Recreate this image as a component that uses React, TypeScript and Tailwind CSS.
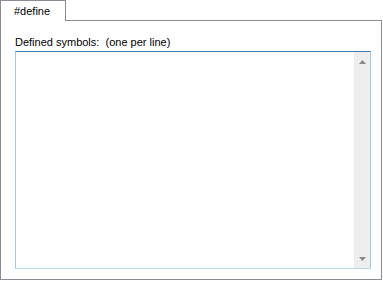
export default function App() {
  return (
    <div className="w-[383px] h-[282px] bg-white font-['Liberation_Sans',Arial,sans-serif] text-[11px] text-black">
      {/* Tab strip */}
      <div className="flex">
        <div className="relative z-10 -mb-px w-[66px] h-[21px] border border-b-0 border-[#898c95] bg-white pl-[13px] pt-[3px] leading-[14px]">
          #define
        </div>
      </div>

      {/* Tab page */}
      <div className="w-[382px] h-[260px] border border-[#898c95] bg-white px-[14px] pt-[14px]">
        <div className="leading-[15px] h-[15px]">Defined symbols:&nbsp; (one per line)</div>

        <div className="mt-[1px] flex w-[356px] h-[218px] border border-[#a4c9e3] border-t-[#3d7bad] border-b-[#b7d9ed] bg-white">
          <div className="flex-1" />
          {/* Vertical scrollbar */}
          <div className="flex w-[17px] flex-col border-l border-white bg-[#eeeeee]">
            <div className="flex h-[17px] items-center justify-center pt-[2px]">
              <svg width="7" height="4" viewBox="0 0 7 4">
                <path d="M3.5 0 L7 4 L0 4 Z" fill="#8a8a8a" />
              </svg>
            </div>
            <div className="flex-1" />
            <div className="flex h-[17px] items-center justify-center pb-[2px]">
              <svg width="7" height="4" viewBox="0 0 7 4">
                <path d="M0 0 L7 0 L3.5 4 Z" fill="#8a8a8a" />
              </svg>
            </div>
          </div>
        </div>
      </div>
    </div>
  );
}
